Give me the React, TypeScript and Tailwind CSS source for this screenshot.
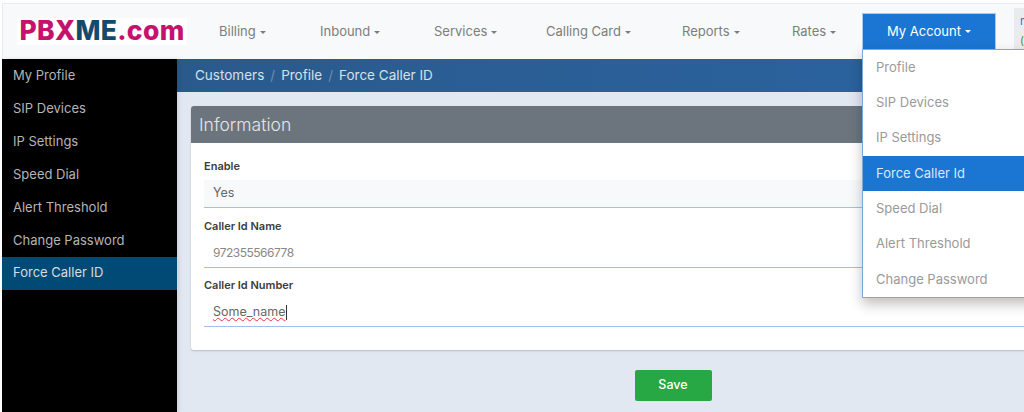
const navItems = [
  { label: "Billing", width: "w-[101px]" },
  { label: "Inbound", width: "w-[114px]" },
  { label: "Services", width: "w-[112px]" },
  { label: "Calling Card", width: "w-[136px]" },
  { label: "Reports", width: "w-[110px]" },
  { label: "Rates", width: "w-[70px]" },
];
const sideItems = ["My Profile", "SIP Devices", "IP Settings", "Speed Dial", "Alert Threshold", "Change Password", "Force Caller ID"];
const menuItems = ["Profile", "SIP Devices", "IP Settings", "Force Caller Id", "Speed Dial", "Alert Threshold", "Change Password"];

function Caret() {
  return <span className="ml-[4px] inline-block border-x-[3px] border-t-[3px] border-x-transparent border-t-current align-middle" />;
}

function Field({ label, value, tone, children }: { label: string; value?: string; tone?: string; children?: React.ReactNode }) {
  return (
    <div className="mb-[7.5px]">
      <div className="h-[20px] text-[11px] font-semibold leading-[20px] text-[#3c3c3c]">{label}</div>
      <div className={`mt-[4px] flex h-[28px] items-center border-b border-[#9cc2ea] px-[9px] text-[#666] ${tone ?? "text-[12.5px]"}`}>
        {value}
        {children}
      </div>
    </div>
  );
}

export default function App() {
  return (
    <div className="relative h-[412px] w-[1024px] overflow-hidden bg-white font-['Inter',sans-serif]">
      <div className="ml-[2px] mt-[3px] flex h-[56px] w-[1100px] items-center border-l border-t border-[#e9ecef] bg-[#f8f9fa]">
        <div className="mb-[1px] ml-[14px] mr-[32px] flex h-[27px] w-[170px] shrink-0 items-center justify-center bg-white text-[26.5px] font-extrabold tracking-[0.3px]">
          <span className="text-[#c5126f]">PBX</span>
          <span className="text-[#124b6c]">ME</span>
          <span className="text-[#c5126f]">.com</span>
        </div>
        {navItems.map((item) => (
          <div key={item.label} className={`shrink-0 text-[13px] whitespace-nowrap text-[#7d7d7d] ${item.width}`}>
            {item.label}
            <Caret />
          </div>
        ))}
        <div className="relative shrink-0 self-start">
          <div className="mt-[9px] flex h-[37px] w-[134px] items-center justify-center border border-[#a9c9ee] bg-[#1a76d2] text-[13px] text-white">
            My Account
            <Caret />
          </div>
          <div className="absolute left-0 top-[45px] z-10 w-[220px] border border-[#7ba9dc] bg-white shadow-[0_6px_12px_rgba(0,0,0,0.25)]">
            {menuItems.map((item) => (
              <div
                key={item}
                className={
                  item === "Force Caller Id"
                    ? "flex h-[35.3px] items-center bg-[#1a76d2] px-[13px] text-[13px] text-[#dce9f7]"
                    : "flex h-[35.3px] items-center px-[13px] text-[13px] text-[#9a9a9a]"
                }
              >
                {item}
              </div>
            ))}
          </div>
        </div>
        <div className="ml-[18px] mt-[4px] h-[41px] w-[60px] shrink-0 self-start bg-[#e9ecef] pl-[6px] pt-[4px] text-[11px] leading-[19px]">
          <div className="text-[#1a76d2]">n</div>
          <div className="text-[#5a8a1a]">(</div>
        </div>
      </div>
      <div className="flex h-[353px]">
        <div className="relative ml-[2px] w-[175px] shrink-0 bg-black pt-[0.4px] shadow-[2px_0_4px_rgba(0,0,0,0.1)]">
          {sideItems.map((item) => (
            <div
              key={item}
              className={
                item === "Force Caller ID"
                  ? "flex h-[32.9px] items-center bg-[#004a75] pl-[11px] text-[13px] text-[#d8dde2]"
                  : "flex h-[32.9px] items-center pl-[11px] text-[13px] text-[#b5b5b5]"
              }
            >
              {item}
            </div>
          ))}
        </div>
        <div className="w-[1000px] shrink-0 bg-[#e2e8f2]">
          <div className="flex h-[33px] items-center bg-gradient-to-r from-[#2a5a8c] to-[#2a66a6] pl-[18px] text-[13.5px] text-[#d5e0eb]">
            Customers
            <span className="mx-[6px] text-[#6f8fb2]">/</span>
            Profile
            <span className="mx-[6px] text-[#6f8fb2]">/</span>
            Force Caller ID
          </div>
          <div className="ml-[14px] mt-[14px] w-[964px]">
            <div className="overflow-hidden rounded-[3px] bg-white shadow-[0_1px_2px_rgba(0,0,0,0.2)]">
              <div className="flex h-[37px] items-center bg-[#6c757d] pl-[8px] pt-[2px] text-[17.5px] font-light text-[#e4e6e8]">Information</div>
              <div className="h-[207px] px-[13px] pt-[13px]">
                <Field label="Enable" value="Yes" tone="bg-[#f8f9fa] text-[12.5px]" />
                <Field label="Caller Id Name" value="972355566778" tone="text-[12px] tracking-[-0.5px] !text-[#888]" />
                <Field label="Caller Id Number">
                  <span className="underline decoration-[#e33] decoration-wavy decoration-1">Some_name</span>
                  <span className="h-[15px] w-px bg-[#333]" />
                </Field>
              </div>
            </div>
            <div className="mt-[20px] flex justify-center">
              <button className="h-[31px] w-[77px] rounded-[2px] bg-[#28a745] text-[12.5px] font-medium text-white">Save</button>
            </div>
          </div>
        </div>
      </div>
    </div>
  );
}
